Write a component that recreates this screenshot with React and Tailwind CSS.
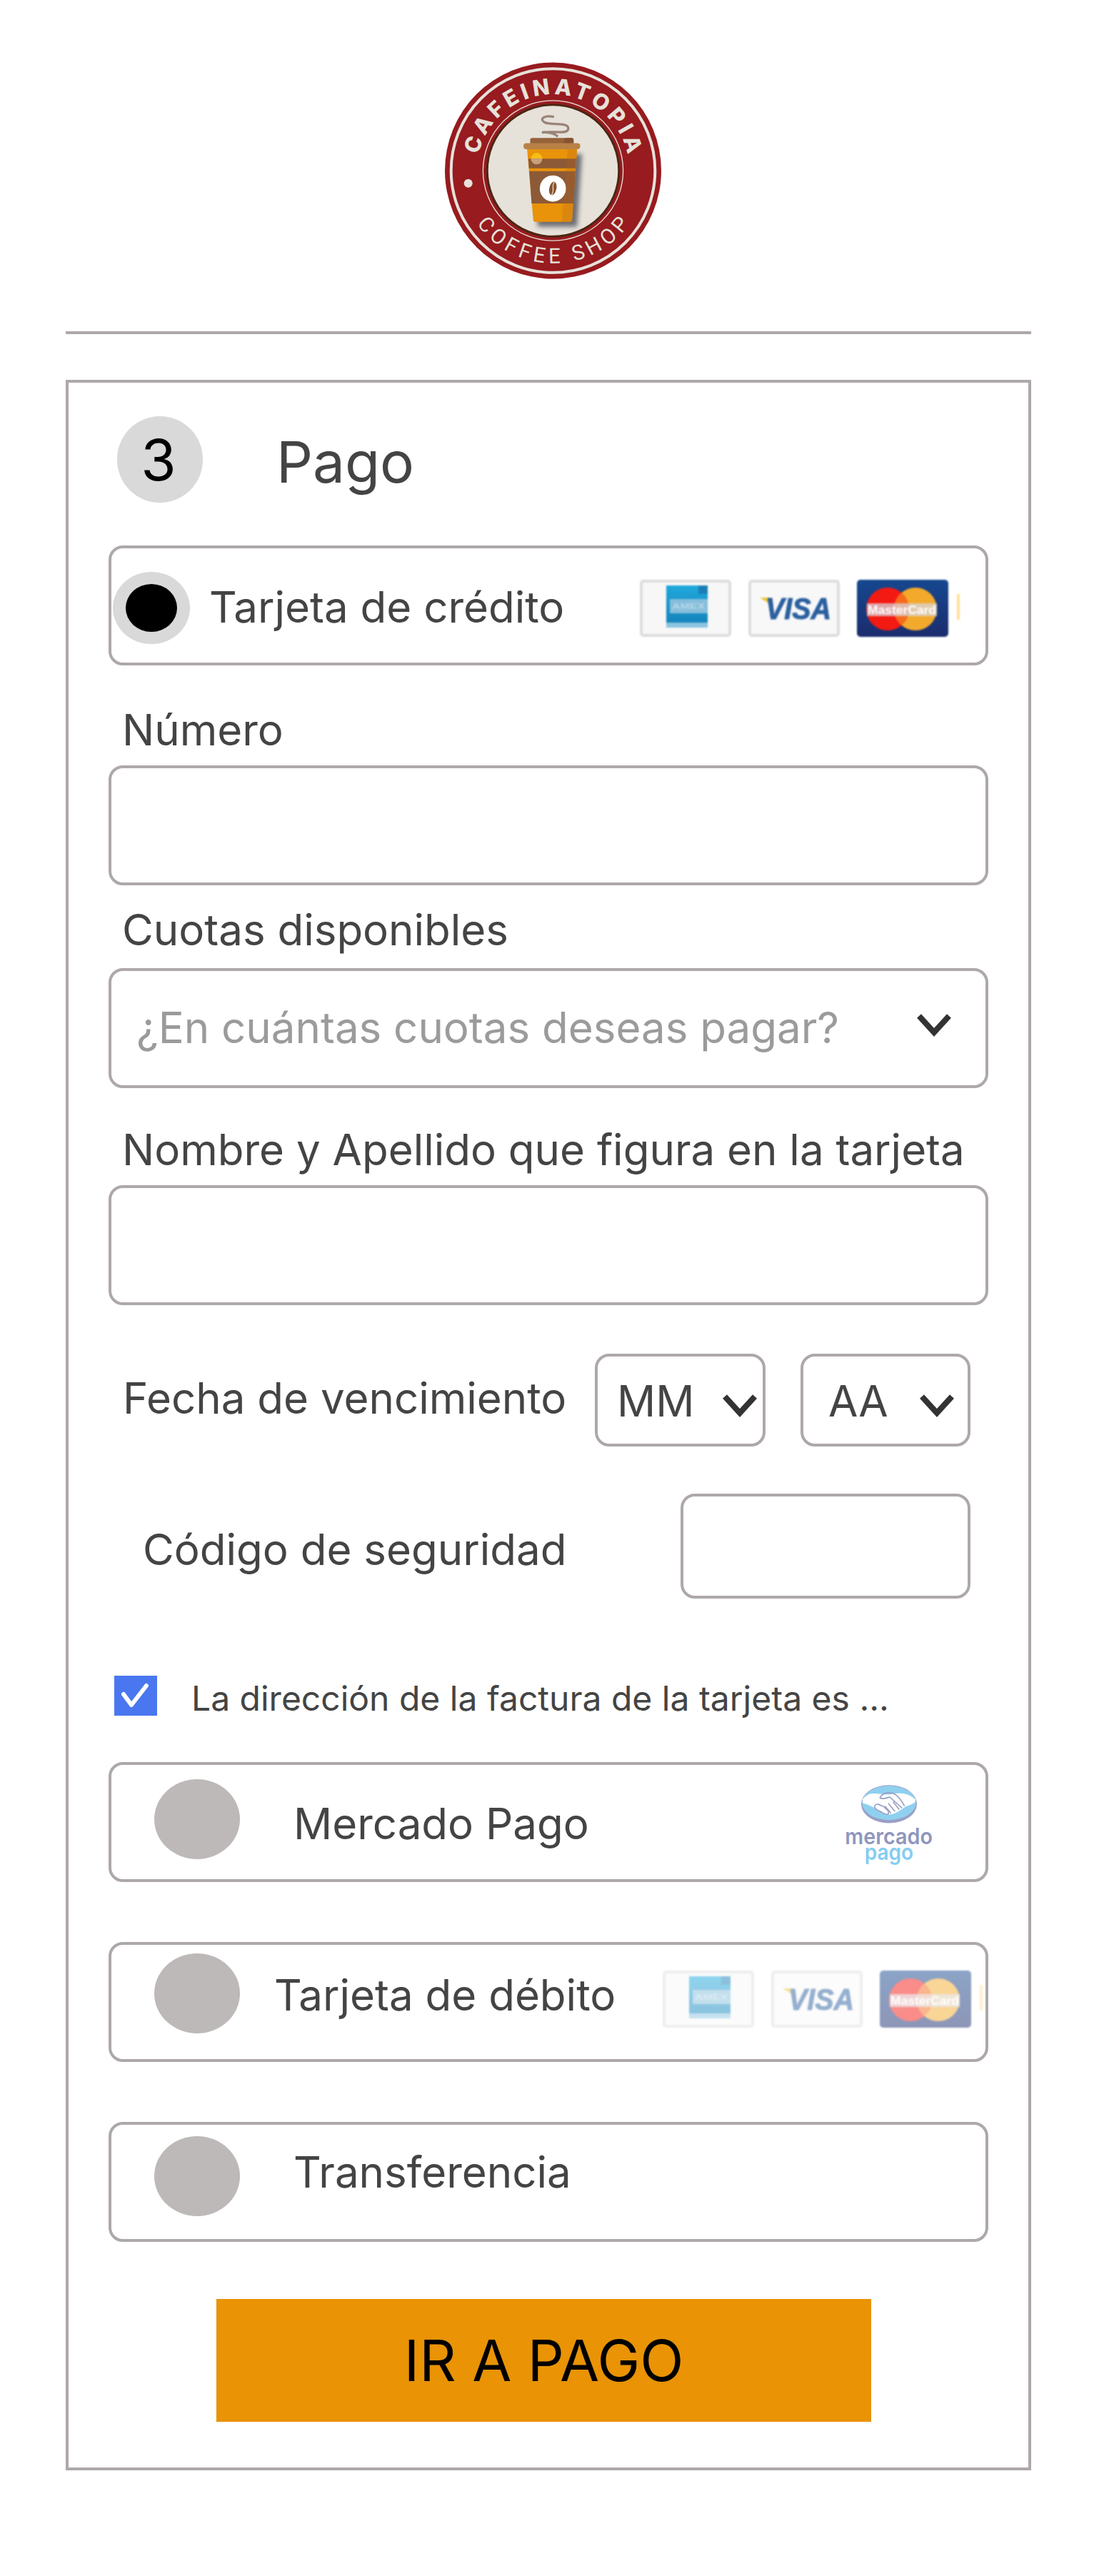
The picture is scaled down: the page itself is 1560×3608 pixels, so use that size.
import React from "react";

const Logo = () => (
  <svg viewBox="130 80 908 910" className="block w-[303px] h-[304px] ml-[531px]">
    <defs>
      <path id="arcTop" d="M 270 590 A 319 319 0 1 1 898 590" />
      <path id="arcBottom" d="M 255 745 A 392 392 0 0 0 913 745" />
      <filter id="cupBlur" x="-30%" y="-30%" width="160%" height="160%">
        <feGaussianBlur stdDeviation="9" />
      </filter>
    </defs>
    <circle cx="584" cy="535" r="454" fill="#971b1f" />
    <circle cx="584" cy="535" r="428" fill="none" stroke="#e6e2da" strokeWidth="12" />
    <circle cx="584" cy="535" r="294" fill="none" stroke="#e6e2da" strokeWidth="4" />
    <circle cx="584" cy="535" r="281" fill="#4c2614" />
    <circle cx="584" cy="535" r="272" fill="#e6e2da" />
    <circle cx="228" cy="588" r="18" fill="#e6e2da" />
    <text fontFamily="Inter, sans-serif" fontWeight="800" fontSize="92" fill="#e6e2da">
      <textPath href="#arcTop" startOffset="50%" textAnchor="middle" textLength="870" lengthAdjust="spacing">
        CAFEINATOPIA
      </textPath>
    </text>
    <text fontFamily="Roboto, sans-serif" fontWeight="400" fontSize="88" fill="#e6e2da">
      <textPath href="#arcBottom" startOffset="50%" textAnchor="middle" textLength="750" lengthAdjust="spacing">
        COFFEE SHOP
      </textPath>
    </text>
    {/* Steam */}
    <path
      d="M588 309 C545 302 525 318 548 332 C575 346 648 330 648 358 C646 386 590 366 537 375 C560 372 590 378 604 392"
      fill="none"
      stroke="#9b8378"
      strokeWidth="10"
    />
    {/* Cup */}
    <path d="M495 465 L705 465 L685 770 L520 770 Z" fill="#2f2f3a" opacity="0.65" filter="url(#cupBlur)" />
    <path d="M475 445 L685 445 L664 742 Q663 750 655 750 L510 750 Q502 750 501 742 Z" fill="#e8930a" />
    <path d="M480 485 L681 485 L679 525 L483 525 Z" fill="#8c5a36" />
    <path d="M484 537 L678 537 L670 673 L494 673 Z" fill="#8c5a36" />
    <path d="M645 445 L685 445 L664 742 Q663 750 655 750 L620 750 Z" fill="#b5651d" opacity="0.25" />
    <path d="M491 485 A24 24 0 0 1 539 485 Z" fill="#f6bf13" />
    <path d="M491 485 A24 24 0 0 0 539 485 Z" fill="#c9a07c" />
    <rect x="488" y="398" width="182" height="30" rx="8" fill="#96623a" />
    <rect x="630" y="398" width="40" height="30" rx="8" fill="#86532f" />
    <rect x="460" y="420" width="238" height="25" rx="12" fill="#b98146" />
    <circle cx="583" cy="610" r="55" fill="#ffffff" />
    <ellipse cx="583" cy="610" rx="15" ry="29" fill="#8a5530" transform="rotate(12 583 610)" />
    <path d="M590 583 C574 600 594 618 577 638" fill="none" stroke="#ffffff" strokeWidth="3" />
  </svg>
);

const MercadoLogo = () => (
  <svg viewBox="180 110 420 350" className="block w-[140px] h-[117px]">
    <ellipse cx="375" cy="199" rx="117" ry="80" fill="#9a9fc6" />
    <ellipse cx="375" cy="194" rx="113" ry="72" fill="#8fd0ef" />
    <path
      d="M264 178 C300 135 340 165 380 158 C420 150 455 150 486 180 C490 195 470 198 440 212 C415 232 390 246 365 242 C335 232 310 205 264 195 Z"
      fill="#ffffff"
    />
    <path
      d="M336 172 C350 150 372 148 392 154 C410 160 425 180 440 207 M336 172 C345 182 365 172 378 170 L430 216 M400 230 L372 196 M418 222 L392 190 M383 238 L358 208"
      fill="none"
      stroke="#9a9fc6"
      strokeWidth="5"
    />
    <path
      d="M316 204 C322 196 335 200 342 206 C352 206 358 214 362 220 C372 224 376 236 370 242 C355 244 345 232 335 228 C322 224 310 214 316 204 Z"
      fill="#ffffff"
      stroke="#9a9fc6"
      strokeWidth="5"
    />
    <text x="190" y="368" fontFamily="Inter, sans-serif" fontWeight="600" fontSize="92" textLength="368" lengthAdjust="spacingAndGlyphs" fill="#8f96bd">
      mercado
    </text>
    <text x="272" y="432" fontFamily="Inter, sans-serif" fontWeight="600" fontSize="92" textLength="205" lengthAdjust="spacingAndGlyphs" fill="#85cdf0">
      pago
    </text>
  </svg>
);

// the three little card pictures plus the cut off sliver of the next one
const CardIcons = ({ faded }) => (
  <div className={`flex items-start gap-[24px] blur-[0.8px] ${faded ? "opacity-50" : ""}`}>
    <svg viewBox="0 0 128 80" className="block w-[128px] h-[80px]">
      <defs>
        <linearGradient id="amexBlue" x1="0" y1="0" x2="0" y2="1">
          <stop offset="0" stopColor="#1fa8dc" />
          <stop offset="1" stopColor="#1580b8" />
        </linearGradient>
      </defs>
      <rect x="2" y="2" width="124" height="76" rx="3" fill="#f7f7f7" stroke="#dddddd" strokeWidth="4" />
      <rect x="37" y="8" width="58" height="59" fill="url(#amexBlue)" />
      <rect x="82" y="8" width="13" height="12" fill="#1a7fb5" />
      <rect x="42" y="27" width="53" height="20" fill="#86bedb" />
      <rect x="37" y="60" width="58" height="7" fill="#8cc4e0" />
      <text x="45" y="41" fontFamily="Liberation Sans, sans-serif" fontWeight="700" fontSize="11" textLength="46" lengthAdjust="spacingAndGlyphs" fill="#b5d6e8">
        AMEX
      </text>
    </svg>
    <svg viewBox="0 0 128 80" className="block w-[128px] h-[80px]">
      <rect x="2" y="2" width="124" height="76" rx="3" fill="#f8f8f8" stroke="#dddddd" strokeWidth="4" />
      <path d="M16 25 L30 25 L33 36 Z" fill="#efc43a" />
      <text
        x="24"
        y="55"
        fontFamily="Liberation Sans, sans-serif"
        fontWeight="700"
        fontStyle="italic"
        fontSize="42"
        textLength="92"
        lengthAdjust="spacingAndGlyphs"
        fill="#2a5f9f"
        stroke="#2a5f9f"
        strokeWidth="1"
      >
        VISA
      </text>
    </svg>
    <svg viewBox="0 0 128 80" className="block w-[128px] h-[80px]">
      <defs>
        <linearGradient id="mcBlue" x1="0" y1="0" x2="0" y2="1">
          <stop offset="0" stopColor="#16488f" />
          <stop offset="1" stopColor="#1b2c6e" />
        </linearGradient>
      </defs>
      <rect width="128" height="80" rx="5" fill="url(#mcBlue)" />
      <circle cx="43" cy="41" r="30" fill="#f41a14" />
      <circle cx="82" cy="41" r="30" fill="#f3aa2c" />
      <path d="M62.5 18 A30 30 0 0 1 62.5 64 A30 30 0 0 1 62.5 18 Z" fill="#f7691c" />
      <rect x="14" y="33" width="98" height="18" fill="#d8d4d8" opacity="0.75" />
      <text
        x="15"
        y="48"
        fontFamily="Liberation Sans, sans-serif"
        fontWeight="700"
        fontSize="16"
        textLength="96"
        lengthAdjust="spacingAndGlyphs"
        fill="#ffffff"
      >
        MasterCard
      </text>
    </svg>
    <div className="w-[4px] h-[36px] mt-[20px] -ml-[12px] bg-[#ffe09a]" />
  </div>
);

const Chevron = ({ className }) => (
  <svg viewBox="0 0 48 33" className={`block w-[48px] h-[33px] ${className}`}>
    <path d="M3 4 L24 27 L45 4" fill="none" stroke="#333333" strokeWidth="8" />
  </svg>
);

const box = "border-4 border-[#aea8a8] rounded-[20px] bg-white";
const text60 = "text-[60px] leading-[60px] text-[#444444] whitespace-nowrap";

const Radio = ({ className }) => (
  <div className={`w-[120px] h-[112px] rounded-[50%] bg-[#bdb9b8] shrink-0 ${className}`} />
);

const Label = ({ className, children }) => (
  <div className={`${text60} ${className}`}>{children}</div>
);

const App = () => {
  return (
    <div className="w-[1560px] h-[3608px] bg-white pt-[87px] font-[Inter]">
      <div className="w-[1352px] ml-[92px]">
        <Logo />
        <div className="h-[4px] mt-[73px] bg-[#aea8a8]" />

        <div className="mt-[64px] h-[2928px] border-4 border-[#aea8a8] pt-[47px] pl-[56px]">
          {/* Step title */}
          <div className="flex items-start h-[121px] ml-[12px]">
            <div className="w-[120px] h-[121px] pr-[4px] rounded-full bg-[#d9d9d9] flex items-center justify-center text-[80px] leading-[80px] text-black">
              3
            </div>
            <div className="ml-[103px] mt-[24px] text-[80px] leading-[80px] text-[#444444]">Pago</div>
          </div>

          <div className="w-[1232px]">
            {/* Credit card */}
            <div className={`${box} mt-[60px] h-[168px] flex items-start`}>
              <div className="mt-[33px] ml-[2px] w-[108px] h-[101px] rounded-[50%] bg-[#d9d9d9] flex items-center justify-center shrink-0">
                <div className="w-[72px] h-[67px] rounded-[50%] bg-black" />
              </div>
              <div className={`${text60} mt-[52px] ml-[27px]`}>Tarjeta de crédito</div>
              <div className="ml-auto mr-[36px] mt-[44px]">
                <CardIcons />
              </div>
            </div>

            <Label className="ml-[19px] mt-[60px]">Número</Label>
            <input className={`${box} block w-full h-[168px] mt-[20px]`} />

            <Label className="ml-[19px] mt-[32px]">Cuotas disponibles</Label>
            <div className={`${box} flex items-start h-[168px] mt-[24px]`}>
              <div className="mt-[49px] ml-[35px] text-[60px] leading-[60px] text-[#9b9b9b] whitespace-nowrap">
                ¿En cuántas cuotas deseas pagar?
              </div>
              <Chevron className="ml-auto mr-[48px] mt-[59px]" />
            </div>

            <Label className="ml-[19px] mt-[56px]">Nombre y Apellido que figura en la tarjeta</Label>
            <input className={`${box} block w-full h-[168px] mt-[20px]`} />

            {/* Expiry */}
            <div className="flex items-start mt-[68px] h-[130px]">
              <Label className="ml-[20px] mt-[32px]">Fecha de vencimiento</Label>
              <div className={`${box} flex items-start ml-auto w-[239px] h-[130px]`}>
                <div className={`${text60} mt-[32px] ml-[27px]`}>MM</div>
                <Chevron className="ml-auto mr-[8px] mt-[52px]" />
              </div>
              <div className={`${box} flex items-start ml-[49px] mr-[25px] w-[238px] h-[130px]`}>
                <div className={`${text60} mt-[32px] ml-[35px]`}>AA</div>
                <Chevron className="ml-auto mr-[19px] mt-[52px]" />
              </div>
            </div>

            {/* Security code */}
            <div className="flex items-start mt-[66px] h-[147px]">
              <div className={`${text60} ml-[48px] mt-[48px]`}>Código de seguridad</div>
              <input className={`${box} block ml-auto mr-[25px] w-[406px] h-[147px]`} />
            </div>

            {/* Billing address */}
            <div className="flex items-start mt-[108px] h-[56px]">
              <div className="ml-[8px] w-[60px] h-[56px] bg-[#4a77f0] shrink-0">
                <svg viewBox="0 0 60 56" className="block w-[60px] h-[56px]">
                  <path d="M13 26 L24 41 L45 14" fill="none" stroke="#ffffff" strokeWidth="6" strokeLinecap="round" strokeLinejoin="round" />
                </svg>
              </div>
              <div className="ml-[48px] mt-[8px] text-[48px] leading-[48px] text-[#444444] whitespace-nowrap">
                La dirección de la factura de la tarjeta es ...
              </div>
            </div>

            {/* Mercado Pago */}
            <div className={`${box} mt-[65px] h-[168px] flex items-start`}>
              <Radio className="mt-[20px] ml-[60px]" />
              <div className={`${text60} mt-[52px] ml-[75px]`}>Mercado Pago</div>
              <div className="ml-auto mr-[60px] mt-[25px]">
                <MercadoLogo />
              </div>
            </div>

            {/* Debit card */}
            <div className={`${box} mt-[84px] h-[168px] flex items-start`}>
              <Radio className="mt-[12px] ml-[60px]" />
              <div className={`${text60} mt-[40px] ml-[48px]`}>Tarjeta de débito</div>
              <div className="ml-auto mr-[4px] mt-[36px]">
                <CardIcons faded />
              </div>
            </div>

            {/* Transfer */}
            <div className={`${box} mt-[84px] h-[168px] flex items-start`}>
              <Radio className="mt-[16px] ml-[60px]" />
              <div className={`${text60} mt-[36px] ml-[75px]`}>Transferencia</div>
            </div>

            <button className="block mt-[80px] ml-[151px] w-[917px] h-[172px] bg-[#e99305] text-[80px] leading-[80px] text-black">
              IR A PAGO
            </button>
          </div>
        </div>
      </div>
    </div>
  );
};

export default App;
